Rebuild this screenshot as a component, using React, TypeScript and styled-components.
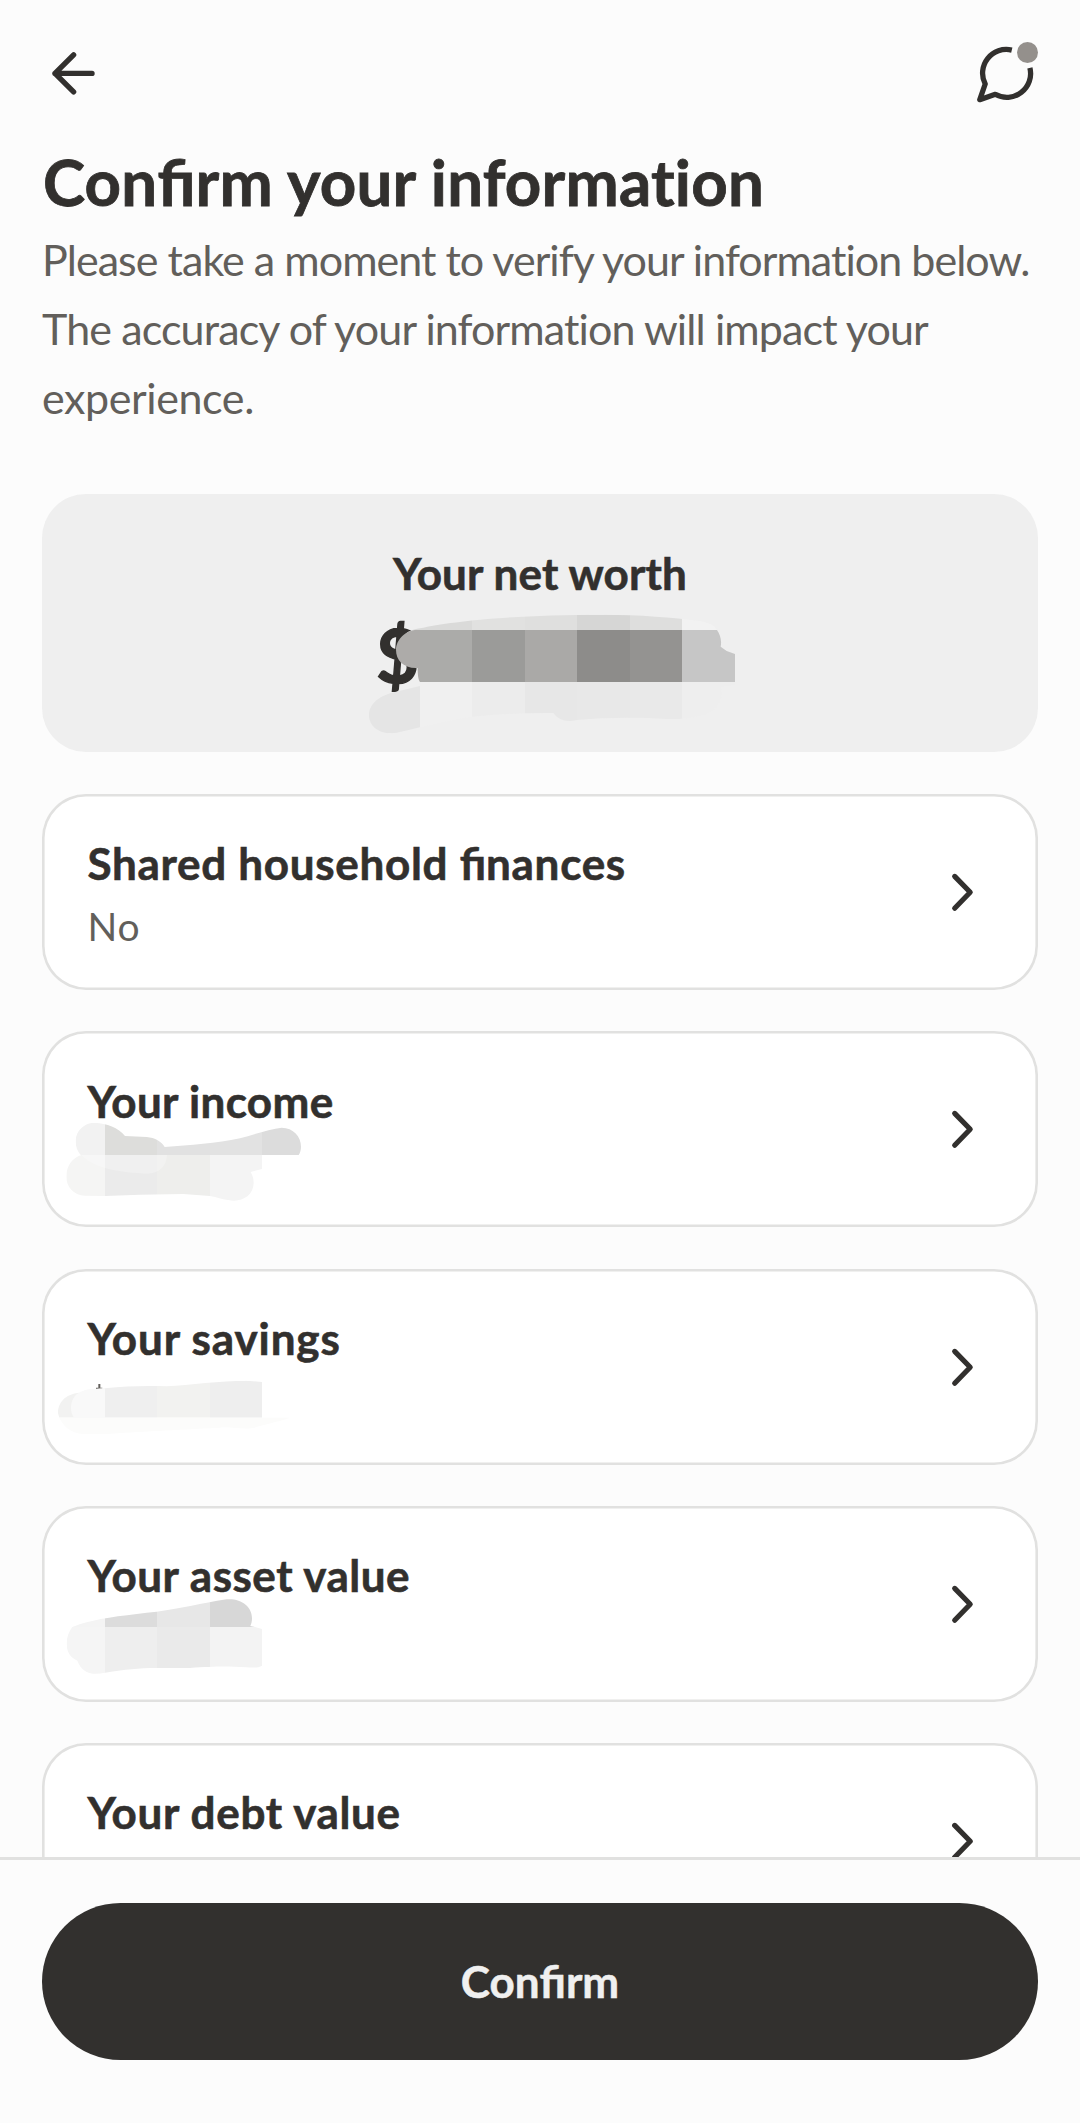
import React, { useId } from "react";
import styled, { createGlobalStyle } from "styled-components";

const ink = "#32302e";
const muted = "#625f5b";
const line = "#e1e1e0";

const GlobalStyle = createGlobalStyle`
  * { box-sizing: border-box; }
  body {
    margin: 0;
    background: #fcfcfc;
    color: ${ink};
    font-family: Lato, "Open Sans", sans-serif;
    font-variant-ligatures: none;
  }
`;

const Screen = styled.div`
  width: 1080px;
  height: 2123px;
  display: flex;
  flex-direction: column;
  overflow: hidden;
`;

const Scroll = styled.main`
  height: 1857px;
  flex: none;
  overflow: hidden;
  padding: 0 42px;
`;

const Header = styled.header`
  height: 144px;
  padding-top: 40px;
  display: flex;
  justify-content: space-between;
  align-items: flex-start;
`;

const IconButton = styled.button`
  display: flex;
  width: 64px;
  height: 64px;
  padding: 0;
  border: 0;
  background: none;
  svg { overflow: visible; }
`;

const Title = styled.h1`
  margin: 0 0 4.5px;
  padding-left: 1px;
  font-size: 63.6px;
  font-weight: 700;
  line-height: 76px;
  letter-spacing: 0.2px;
  white-space: nowrap;
  -webkit-text-stroke: 0.8px currentColor;
`;

const Intro = styled.p`
  margin: 0 0 62.5px;
  color: ${muted};
  font-size: 43px;
  line-height: 69px;
`;

const IntroLine = styled.span<{ $tracking: number }>`
  display: block;
  letter-spacing: ${(p) => p.$tracking}px;
  white-space: nowrap;
`;

const Lig = styled.span`
  letter-spacing: 0;
  font-variant-ligatures: common-ligatures;
`;

const NetWorth = styled.section`
  position: relative;
  height: 258px;
  margin-bottom: 42px;
  padding-top: 53px;
  border-radius: 44px;
  background: #efefef;
`;

const NetLabel = styled.h2`
  margin: 0 0 15px;
  font-size: 44px;
  font-weight: 700;
  line-height: 52px;
  letter-spacing: 0.15px;
  text-align: center;
  -webkit-text-stroke: 0.6px currentColor;
`;

const NetValue = styled.div`
  padding-left: 334px;
  font-size: 74px;
  font-weight: 700;
  line-height: 82px;
  -webkit-text-stroke: 1.4px currentColor;
`;

const List = styled.div`
  display: flex;
  flex-direction: column;
  gap: 41.25px;
`;

const Row = styled.section`
  position: relative;
  flex: none;
  height: 196px;
  padding: 0 64px 0 45.4px;
  display: flex;
  align-items: center;
  justify-content: space-between;
  border-radius: 44px;
  background: #fff;
  box-shadow: inset 0 0 0 2.6px ${line};
`;

const RowText = styled.div`
  height: 196px;
  padding-top: 43.4px;
  display: flex;
  flex-direction: column;
  gap: 13.6px;
`;

const RowTitle = styled.h3<{ $tracking: number }>`
  margin: 0;
  font-size: 44px;
  font-weight: 700;
  line-height: 52px;
  letter-spacing: ${(p) => p.$tracking}px;
  white-space: nowrap;
  -webkit-text-stroke: 0.6px currentColor;
`;

const RowValue = styled.div`
  color: ${muted};
  font-size: 39px;
  line-height: 46px;
  letter-spacing: 1px;
`;

const Footer = styled.footer`
  flex: 1;
  padding: 42.7px 42px 0;
  border-top: 3px solid ${line};
  background: #fcfcfc;
`;

const ConfirmButton = styled.button`
  display: flex;
  align-items: center;
  justify-content: center;
  width: 100%;
  height: 157px;
  padding: 0;
  border: 0;
  border-radius: 79px;
  background: ${ink};
  color: #f0f0f0;
  font: 700 44px/52px Lato, sans-serif;
  -webkit-text-stroke: 0.5px currentColor;
`;

const Overlay = styled.svg<{ $x: number; $y: number }>`
  position: absolute;
  left: ${(p) => p.$x}px;
  top: ${(p) => p.$y}px;
  pointer-events: none;
`;

type Band = { shape: string; columns: [number, string][] };

/* A brushed mosaic band: vertical colour columns cut to a freehand outline. */
function Mosaic({ shape, columns }: Band) {
  const id = useId();
  return (
    <>
      <clipPath id={id}>
        <path d={shape} />
      </clipPath>
      <g clipPath={`url(#${id})`} shapeRendering="crispEdges">
        {columns.map(([x, fill], i) => (
          <rect key={x} x={x} y={0} width={(columns[i + 1]?.[0] ?? 1260) - x} height={840} fill={fill} />
        ))}
      </g>
    </>
  );
}

function NetMask() {
  return (
    <Overlay $x={298} $y={-14} width={420} height={280} viewBox="0 0 1260 840">
      <Mosaic
        shape="M200 458 Q215 449 240 445 C330 425 500 405 790 404 C900 404 1000 413 1075 422 C1110 428 1125 437 1131 450 L1131 451 L200 459Z"
        columns={[[0, "#d9d9d8"], [240, "#dadad9"], [396, "#e1e1e0"], [555, "#dfdfde"], [711, "#d6d6d5"], [870, "#dededd"], [1026, "#f2f2f2"]]}
      />
      <Mosaic
        shape="M168 510 C168 478 198 450 230 450 L1131 450 C1140 464 1146 480 1142 500 L1160 513 L1185 522 L1185 606 L240 606 C235 600 233 585 233 564 C190 566 168 540 168 510Z"
        columns={[[0, "#adaba9"], [240, "#ababa9"], [396, "#9b9b99"], [555, "#aaa9a7"], [711, "#8d8c8a"], [870, "#949391"], [1026, "#c6c6c6"]]}
      />
      <Mosaic
        shape="M87 706 C87 670 120 645 168 635 L240 618 L240 606 L1185 606 L1185 615 L1143 620 C1150 650 1140 690 1090 705 C1050 716 1010 718 980 717 C900 712 800 712 710 720 C680 727 655 720 640 699 C560 698 480 702 396 710 C340 718 290 732 240 742 L180 756 C130 770 87 745 87 706Z"
        columns={[[0, "#e5e5e5"], [240, "#f0f0f0"], [396, "#ececec"], [555, "#e7e7e7"], [711, "#e8e8e8"], [870, "#e9e9e9"], [1026, "#eeeeee"]]}
      />
    </Overlay>
  );
}

function IncomeMask() {
  return (
    <Overlay $x={-2} $y={28.75} width={320} height={160} viewBox="0 0 960 480">
      <Mosaic
        shape="M107 245 C107 210 135 188 165 188 C200 190 235 202 255 228 L320 231 C345 233 365 245 374 261 C450 256 530 250 600 235 C640 224 690 207 725 203 C760 203 783 230 783 260 C783 270 780 280 776 285 L122 285 C112 272 107 260 107 245Z"
        columns={[[0, "#f2f2f2"], [195, "#dddddb"], [351, "#e1e1e1"], [510, "#e2e2e2"], [666, "#dcdcdc"]]}
      />
      <Mosaic
        shape="M79 350 C79 315 100 292 125 285 L666 285 L666 327 L632 336 C640 350 641 360 641 370 C640 405 610 423 580 422 C550 420 530 411 510 408 L430 402 L300 404 L195 408 L135 407 C100 405 79 380 79 350Z"
        columns={[[0, "#f5f5f4"], [195, "#ebebeb"], [351, "#eeeeec"], [510, "#f4f4f4"]]}
      />
      <path d="M125 285 L381 285 C380 320 355 342 320 341 C240 338 160 325 125 285Z" fill="#fff" opacity={0.25} />
    </Overlay>
  );
}

function SavingsMask() {
  return (
    <Overlay $x={-2} $y={31.5} width={320} height={160} viewBox="0 0 960 480">
      <path d="M178 252 V267 M168 266 H187" stroke={muted} strokeWidth={6} />
      <Mosaic
        shape="M54 340 C54 300 85 280 120 278 C140 268 165 267 195 265 C260 258 320 257 380 259 C450 255 540 242 620 242 L666 246 L666 353 L58 353Z"
        columns={[[0, "#f2f2f1"], [195, "#efefef"], [351, "#f2f2f0"], [510, "#eeeeee"]]}
      />
      <path d="M93 325 C93 290 115 267 165 267 L195 265 L195 353 L102 353 C96 345 93 335 93 325Z" fill="#f9f9f9" />
      <path
        d="M58 353 L750 353 C720 365 690 368 640 384 C600 390 570 378 540 383 C400 390 300 395 195 402 L130 402 C90 400 68 375 58 353Z"
        fill="#fcfcfb"
      />
    </Overlay>
  );
}

function AssetMask() {
  return (
    <Overlay $x={-2} $y={34.25} width={400} height={160} viewBox="0 0 1200 480">
      <Mosaic
        shape="M97 261 Q115 253 140 247 C190 232 270 224 350 215 C430 205 480 190 560 178 C605 175 636 200 636 235 C636 245 634 252 631 258 L645 261Z"
        columns={[[0, "#f4f4f4"], [195, "#dcdcdc"], [351, "#e7e7e7"], [510, "#d7d7d7"]]}
      />
      <Mosaic
        shape="M80 312 C80 290 87 275 97 261 L645 261 L666 267 L666 377 C655 384 640 383 620 382 C550 378 520 380 450 384 L330 384 C280 386 230 392 195 398 C150 408 125 395 112 362 C90 352 80 335 80 312Z"
        columns={[[0, "#f5f5f5"], [195, "#eeeeee"], [351, "#eaeaea"], [510, "#f3f3f3"]]}
      />
    </Overlay>
  );
}

const Chevron = () => (
  <svg width={24} height={48} viewBox="0 0 24 48" fill="none" stroke={ink} strokeWidth={5.2} strokeLinecap="round" strokeLinejoin="round">
    <path d="M4.7 8.4 L20.2 24.3 L4.7 40.2" />
  </svg>
);

const rows: { title: React.ReactNode; tracking: number; value?: string; mask?: React.ReactNode }[] = [
  { title: <>Shared household <Lig>fi</Lig>nances</>, tracking: 0.7, value: "No" },
  { title: "Your income", tracking: 0.35, mask: <IncomeMask /> },
  { title: "Your savings", tracking: 0.88, mask: <SavingsMask /> },
  { title: "Your asset value", tracking: 0.52, mask: <AssetMask /> },
  { title: "Your debt value", tracking: 0.68 },
];

export default function App() {
  return (
    <Screen>
      <GlobalStyle />
      <Scroll>
        <Header>
          <IconButton aria-label="Back">
            <svg width={64} height={64} viewBox="42 40 64 64" fill="none" stroke={ink} strokeWidth={5.4} strokeLinecap="round" strokeLinejoin="round">
              <path d="M73.6 54.9 L55 73.4 L73.6 91.9 M55 73.4 H92" />
            </svg>
          </IconButton>
          <IconButton aria-label="Messages">
            <svg width={64} height={64} viewBox="974 40 64 64" fill="none" stroke={ink} strokeWidth={5.3} strokeLinejoin="round">
              <path d="M1011.8 50.1 A23.7 23.7 0 0 0 985.2 84 L979.8 99.7 L995.3 94.3 A23.7 23.7 0 0 0 1029.9 67.9" />
              <circle cx={1027.5} cy={52.5} r={10.5} fill="#94908c" stroke="none" />
            </svg>
          </IconButton>
        </Header>
        <Title>Con<Lig>fi</Lig>rm your information</Title>
        <Intro>
          <IntroLine $tracking={-0.96}>Please take a moment to verify your information below.</IntroLine>
          <IntroLine $tracking={-0.88}>The accuracy of your information will impact your</IntroLine>
          <IntroLine $tracking={-0.4}>experience.</IntroLine>
        </Intro>
        <NetWorth>
          <NetLabel>Your net worth</NetLabel>
          <NetValue>$</NetValue>
          <NetMask />
        </NetWorth>
        <List>
          {rows.map((row, i) => (
            <Row key={i}>
              <RowText>
                <RowTitle $tracking={row.tracking}>{row.title}</RowTitle>
                {row.value && <RowValue>{row.value}</RowValue>}
              </RowText>
              <Chevron />
              {row.mask}
            </Row>
          ))}
        </List>
      </Scroll>
      <Footer>
        <ConfirmButton>
          <span>Con<Lig>fi</Lig>rm</span>
        </ConfirmButton>
      </Footer>
    </Screen>
  );
}
